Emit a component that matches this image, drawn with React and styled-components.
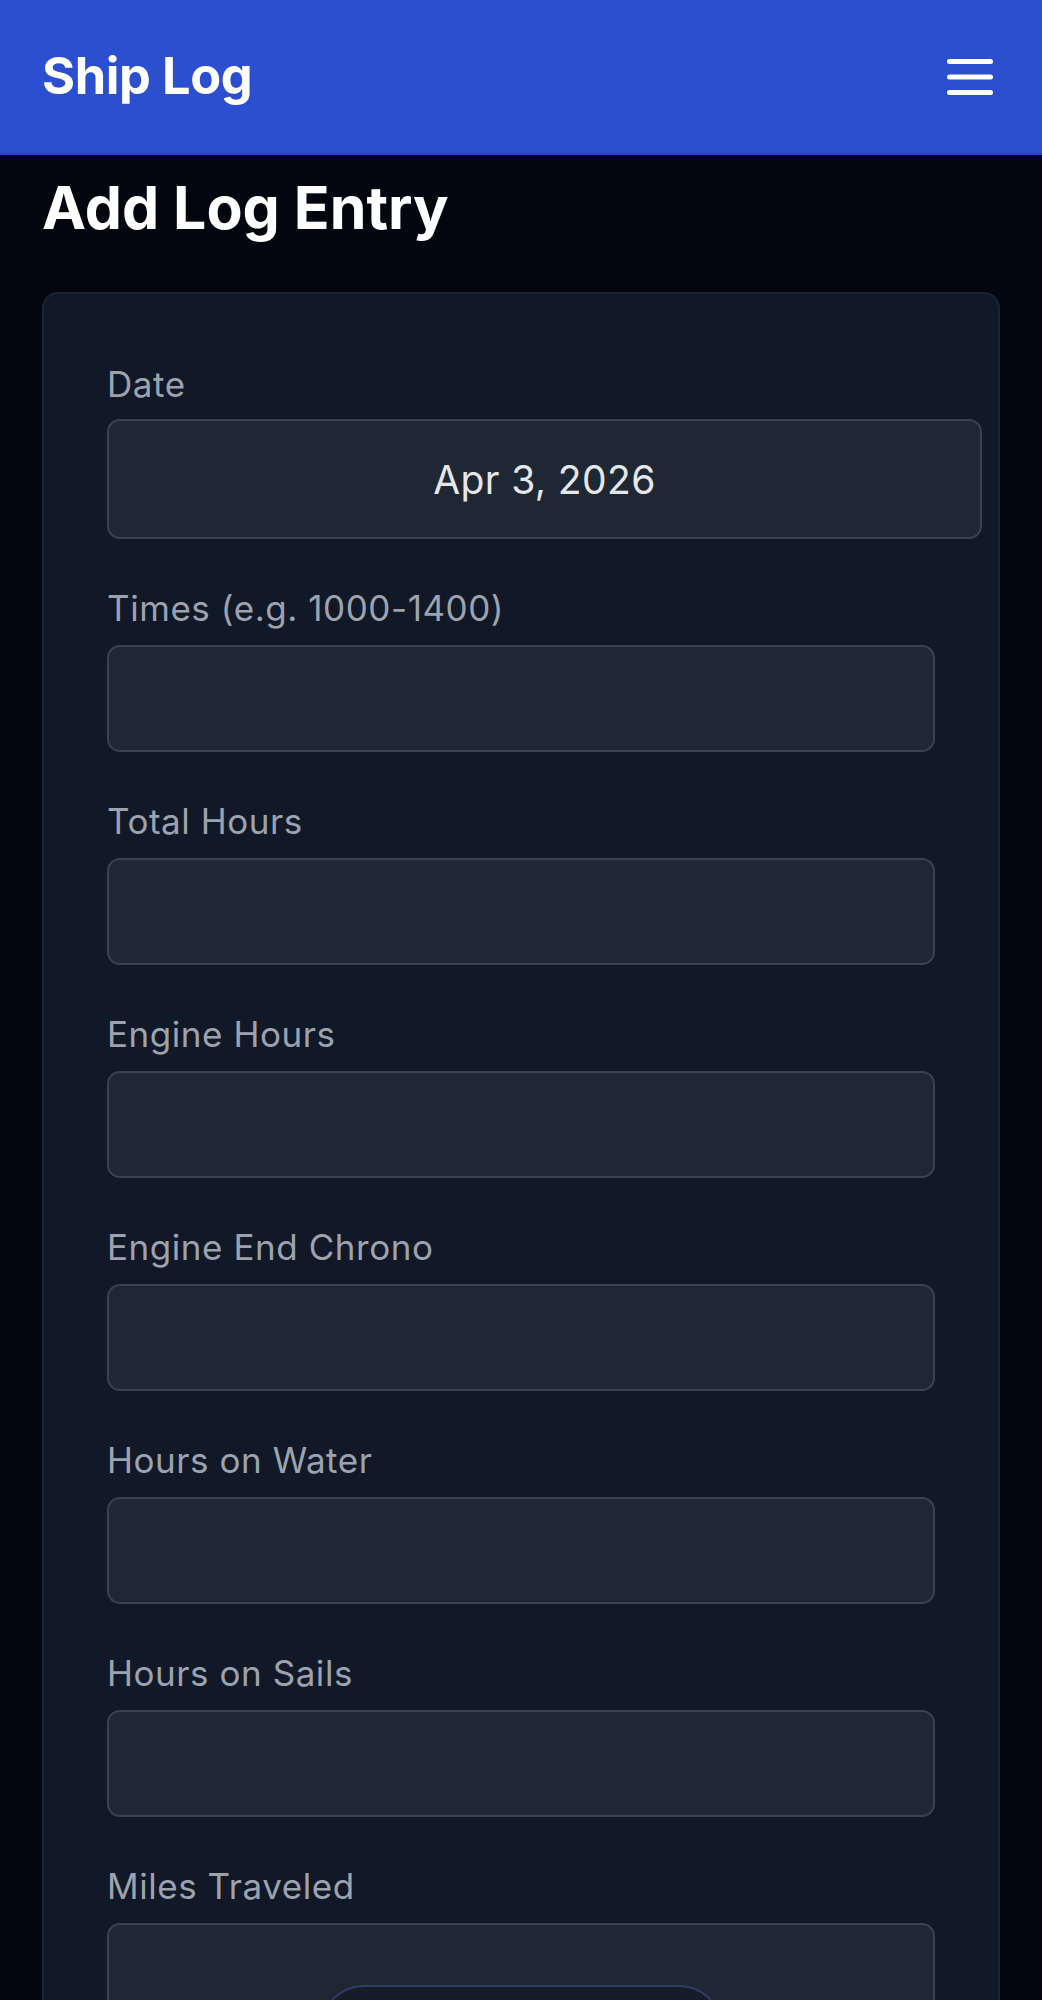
import React from "react";
import styled, { createGlobalStyle } from "styled-components";

const GlobalStyle = createGlobalStyle`
  html, body {
    margin: 0;
    padding: 0;
    background: #03060f;
  }
  body {
    font-family: Inter, "Noto Sans", "Liberation Sans", sans-serif;
    -webkit-font-smoothing: antialiased;
  }
  * { box-sizing: border-box; }
`;

const Page = styled.div`
  min-height: 2000px;
  background: #03060f;
`;

const Header = styled.header`
  height: 155px;
  background: #2b4fcf;
  border-bottom: 2px solid #2743b6;
  display: flex;
  align-items: center;
  justify-content: space-between;
  padding: 0 49px 0 42px;
`;

const Brand = styled.h1`
  margin: 0;
  color: #ffffff;
  font-size: 50.5px;
  font-weight: 700;
  letter-spacing: -0.4px;
  line-height: 1;
`;

const MenuButton = styled.button`
  background: none;
  border: none;
  padding: 0;
  display: flex;
  cursor: pointer;
`;

const Main = styled.main`
  padding: 18px 42px 0;
`;

const Title = styled.h2`
  margin: 0 0 49px;
  color: #ffffff;
  font-size: 59px;
  font-weight: 700;
  line-height: 70px;
  letter-spacing: 0;
`;

const Card = styled.form`
  background: #111827;
  border: 2px solid #1c2331;
  border-radius: 16px;
  padding: 66px 63px 60px;
  display: flex;
  flex-direction: column;
  gap: 45px;
`;

const Field = styled.div`
  display: flex;
  flex-direction: column;
`;

const Label = styled.label`
  color: #9ca3af;
  font-size: 35px;
  line-height: 48px;
  letter-spacing: 0.55px;
  margin-bottom: ${(p) => (p.$tight ? 11 : 13)}px;
`;

const Input = styled.input`
  display: block;
  width: ${(p) => (p.$wide ? "875px" : "100%")};
  height: ${(p) => (p.$tall ? 120 : 107)}px;
  background: #1f2735;
  border: 2px solid #394252;
  border-radius: 13px;
  color: #e5e7eb;
  font-family: inherit;
  font-size: 39px;
  letter-spacing: 0.4px;
  text-align: ${(p) => (p.$center ? "center" : "left")};
  padding: 0 24px;
  outline: none;
  appearance: none;
`;

const FloatingPill = styled.div`
  position: fixed;
  left: 320px;
  width: 403px;
  bottom: -80px;
  height: 95px;
  background: #161d2a;
  border: 2px solid #2f3f63;
  border-radius: 44px;
`;

const fields = [
  "Times (e.g. 1000-1400)",
  "Total Hours",
  "Engine Hours",
  "Engine End Chrono",
  "Hours on Water",
  "Hours on Sails",
  "Miles Traveled",
];

function MenuIcon() {
  return (
    <svg width="46" height="36" viewBox="0 0 46 36" fill="none">
      <line x1="2.5" y1="2.5" x2="43.5" y2="2.5" stroke="#fff" strokeWidth="5" strokeLinecap="round" />
      <line x1="2.5" y1="18" x2="43.5" y2="18" stroke="#fff" strokeWidth="5" strokeLinecap="round" />
      <line x1="2.5" y1="33.5" x2="43.5" y2="33.5" stroke="#fff" strokeWidth="5" strokeLinecap="round" />
    </svg>
  );
}

export default function App() {
  return (
    <>
      <GlobalStyle />
      <Page>
        <Header>
          <Brand>Ship Log</Brand>
          <MenuButton aria-label="Menu">
            <MenuIcon />
          </MenuButton>
        </Header>
        <Main>
          <Title>Add Log Entry</Title>
          <Card onSubmit={(e) => e.preventDefault()}>
            <Field>
              <Label $tight>Date</Label>
              <Input $wide $tall $center readOnly value="Apr 3, 2026" />
            </Field>
            {fields.map((f) => (
              <Field key={f}>
                <Label>{f}</Label>
                <Input />
              </Field>
            ))}
          </Card>
        </Main>
        <FloatingPill />
      </Page>
    </>
  );
}
